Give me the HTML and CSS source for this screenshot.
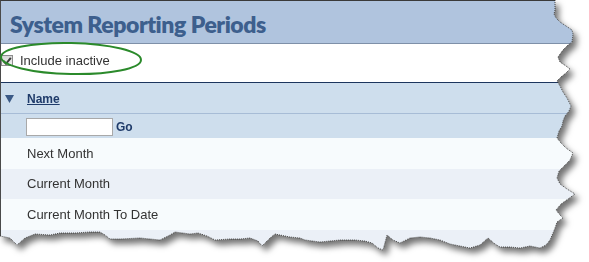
FILE: index.html
```html
<!DOCTYPE html>
<html>
<head>
<meta charset="utf-8">
<link rel="stylesheet" href="styles.css">
</head>
<body>
<div class="stage">
  <div class="frame">
    <div class="sheet">
      <header class="title-bar"><h1>System Reporting Periods</h1></header>
      <div class="options">
        <label class="opt">
          <span class="cb"><svg width="10" height="10" viewBox="0 0 10 10"><path d="M1.5 5 L4 7.8 L8.8 1.8" fill="none" stroke="#3c3c3c" stroke-width="2"/></svg></span>
          <span>Include inactive</span>
        </label>
      </div>
      <div class="grid">
        <div class="head-row">
          <span class="sort"><svg width="9" height="8" viewBox="0 0 9 8"><path d="M0 0 H9 L4.5 8 Z" fill="#3b5a86"/></svg></span>
          <a class="col-link" href="#">Name</a>
        </div>
        <div class="filter-row">
          <span class="filter-input"></span>
          <span class="go">Go</span>
        </div>
        <div class="row odd">Next Month</div>
        <div class="row even">Current Month</div>
        <div class="row odd">Current Month To Date</div>
        <div class="row even"></div>
      </div>
    </div>
    <svg class="oval" width="150" height="42" viewBox="0 0 150 42">
      <ellipse cx="71" cy="17.5" rx="70" ry="15.5" fill="none" stroke="#2b8a2b" stroke-width="2" transform="rotate(1.2 71 17.5)"/>
    </svg>
  </div>
  <svg class="edge" width="589" height="262" viewBox="0 0 589 262">
    <polyline fill="none" stroke="#222" stroke-width="0.8" stroke-dasharray="1 1" points="555,0 555,10 554,14 556,18 560,22 566,26 572,30 573,34 572,42 567,46 563,50 558,57 560,62 566,66 570,69 566,73 561,77 557,81 560,86 563,92 567,98 571,106 569,111 565,116 563,121 562,126 559,131 557,138 561,143 566,148 573,153 570,160 564,166 559,171 557,178 560,184 567,189 575,194 568,199 561,204 556,210 560,215 563,218 557,222 555,228 553,233 550,240 546,245 540,248 530,246 520,248 510,247 500,247 495,244 488,238 480,245 470,248 460,246 450,244 440,240 430,238 420,237 410,238 400,243 393,240 387,235 383,250 378,248 372,243 365,241 355,240 340,240 320,242 305,240 300,238 290,237 275,234 270,238 262,246 258,241 250,238 240,239 230,239 215,240 207,236 198,233 190,234 175,232 170,235 160,240 140,238 120,239 110,239 105,235 100,232 90,232 75,233 60,233 50,235 35,234 25,238 17,245 10,238 0,236"/>
  </svg>
</div>
</body>
</html>
```

FILE: styles.css
```css
* { box-sizing: border-box; }
html, body { margin: 0; padding: 0; background: #fff; }
body { width: 589px; height: 262px; overflow: hidden; font-family: "Liberation Sans", Arial, sans-serif; }

.stage { position: relative; width: 589px; height: 262px; }

.frame {
  position: relative;
  width: 589px;
  height: 262px;
  filter: drop-shadow(4px 5px 3px rgba(0,0,0,0.55));
}

.sheet {
  width: 580px;
  height: 255px;
  background: #fff;
  border-top: 1px solid #3a3a3a;
  border-left: 1px solid #4a4a4a;
  display: flex;
  flex-direction: column;
  clip-path: polygon(0px 0px, 555px 0px, 555px 10px, 554px 14px, 556px 18px, 560px 22px, 566px 26px, 572px 30px, 573px 34px, 572px 42px, 567px 46px, 563px 50px, 558px 57px, 560px 62px, 566px 66px, 570px 69px, 566px 73px, 561px 77px, 557px 81px, 560px 86px, 563px 92px, 567px 98px, 571px 106px, 569px 111px, 565px 116px, 563px 121px, 562px 126px, 559px 131px, 557px 138px, 561px 143px, 566px 148px, 573px 153px, 570px 160px, 564px 166px, 559px 171px, 557px 178px, 560px 184px, 567px 189px, 575px 194px, 568px 199px, 561px 204px, 556px 210px, 560px 215px, 563px 218px, 557px 222px, 555px 228px, 553px 233px, 550px 240px, 546px 245px, 540px 248px, 530px 246px, 520px 248px, 510px 247px, 500px 247px, 495px 244px, 488px 238px, 480px 245px, 470px 248px, 460px 246px, 450px 244px, 440px 240px, 430px 238px, 420px 237px, 410px 238px, 400px 243px, 393px 240px, 387px 235px, 383px 250px, 378px 248px, 372px 243px, 365px 241px, 355px 240px, 340px 240px, 320px 242px, 305px 240px, 300px 238px, 290px 237px, 275px 234px, 270px 238px, 262px 246px, 258px 241px, 250px 238px, 240px 239px, 230px 239px, 215px 240px, 207px 236px, 198px 233px, 190px 234px, 175px 232px, 170px 235px, 160px 240px, 140px 238px, 120px 239px, 110px 239px, 105px 235px, 100px 232px, 90px 232px, 75px 233px, 60px 233px, 50px 235px, 35px 234px, 25px 238px, 17px 245px, 10px 238px, 0px 236px);
}

.title-bar {
  height: 43px;
  background: #b0c4de;
  border-bottom: 1px solid #7e90a8;
  padding-left: 9px;
  display: flex;
  align-items: center;
}
.title-bar h1 {
  margin: 0;
  font-family: "Lato", "Open Sans", sans-serif;
  font-weight: 800;
  font-size: 23px;
  letter-spacing: -0.45px;
  color: #3d5f8d;
  line-height: 1;
  padding-top: 5px;
}

.options {
  height: 39px;
  border-bottom: 1px solid #1c355e;
  padding-top: 9px;
}
.opt {
  display: flex;
  align-items: center;
  gap: 7px;
  font-size: 13px;
  color: #333;
}
.cb {
  width: 12px;
  height: 11px;
  border: 1px solid #8d8d8d;
  background: linear-gradient(#d6d6d6, #f2f2f2);
  display: flex;
  align-items: center;
  justify-content: center;
}

.grid { display: flex; flex-direction: column; flex: 1; }

.head-row {
  height: 31px;
  background: #cedeed;
  border-bottom: 1px solid #a7bcd6;
  display: flex;
  align-items: center;
}
.sort { width: 26px; padding-left: 4px; display: flex; padding-top: 1px; }
.col-link {
  font-size: 12px;
  font-weight: 700;
  color: #1f3b6a;
  text-decoration: underline;
  padding-top: 1px;
}

.filter-row {
  height: 24px;
  background: #cedeed;
  display: flex;
  align-items: center;
  padding-left: 25px;
  gap: 3px;
}
.filter-input {
  width: 87px;
  height: 18px;
  background: #fff;
  border: 1px solid #a9a9a9;
  margin-top: 2px;
}
.go { font-size: 12px; font-weight: 700; color: #1f3b6a; padding-top: 1px; }

.row {
  height: 31px;
  line-height: 31px;
  padding-left: 26px;
  font-size: 13px;
  color: #333;
}
.row.odd { background: #f7fbfd; }
.row.even { background: #ebf0f7; flex: 1; }
.row.even:nth-child(4) { flex: none; height: 30px; line-height: 30px; }

.oval {
  position: absolute;
  left: 0;
  top: 41px;
}

.edge {
  position: absolute;
  left: 0;
  top: 0;
  pointer-events: none;
}
```
